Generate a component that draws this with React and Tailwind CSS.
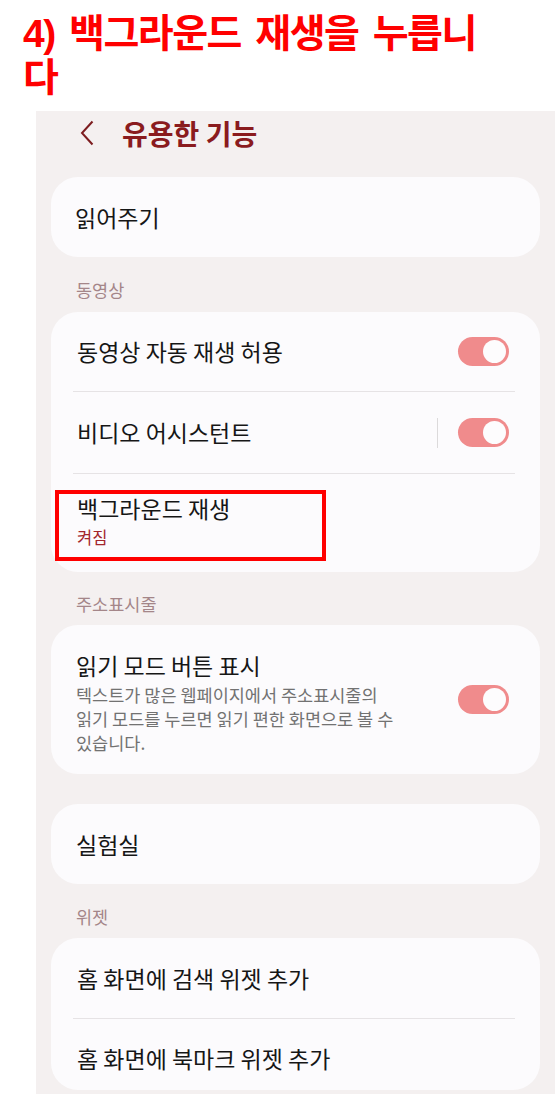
import React from 'react';

const FONT = { fontFamily: '"Noto Sans CJK KR", "Noto Sans", sans-serif' };

function Toggle() {
  return (
    <div className="w-[51px] h-[29px] rounded-full bg-[#f08b8c] flex items-center justify-end pr-[3px] shrink-0">
      <div className="w-[23px] h-[23px] rounded-full bg-[#fdfcfd]" />
    </div>
  );
}

function Divider() {
  return <div className="h-px bg-[#e6e3e5] ml-[22px] mr-[25px]" />;
}

function SectionLabel({ children, pt }) {
  return (
    <div className={`flex items-center pl-[25px] text-[17.5px] text-[#a48689] ${pt}`}>
      {children}
    </div>
  );
}

function Row({ label, height, toggle, separator }) {
  return (
    <div className={`flex items-center justify-between pl-[26px] pr-[31px] ${height}`}>
      <span className="text-[23px] text-[#161616]">{label}</span>
      {toggle && (
        <div className="flex items-center">
          {separator && <div className="w-px h-[30px] bg-[#dcdadb] mr-[20px]" />}
          <Toggle />
        </div>
      )}
    </div>
  );
}

export default function App() {
  return (
    <div className="w-[555px] h-[1094px] bg-white overflow-hidden" style={FONT}>
      <div className="h-[111px] pl-[23px] pt-[12px]">
        <h1
          className="w-[474px] text-[39px] leading-[44px] font-bold text-[#ff0000] tracking-[-1.5px] [word-spacing:5px]"
          style={{ fontFamily: '"Liberation Sans", "Noto Sans CJK KR", sans-serif' }}
        >
          4) 백그라운드 재생을 누릅니다
        </h1>
      </div>

      <div className="ml-[36px] h-[983px] bg-[#f4f0f0] px-[15px]">
        <div className="h-[44px] flex items-center">
          <svg width="14" height="26" viewBox="0 0 14 26" className="ml-[29px]">
            <path d="M12.5 1.5 L2 13 L12.5 24.5" fill="none" stroke="#7d1d20" strokeWidth="2" />
          </svg>
          <span className="ml-[28px] text-[28px] font-bold text-[#8a1b1e]">유용한 기능</span>
        </div>

        <div className="mt-[22px] h-[80px] rounded-[27px] bg-[#fcfbfd] flex items-center pl-[24px]">
          <span className="text-[23px] text-[#161616]">읽어주기</span>
        </div>

        <SectionLabel pt="h-[55px] pt-[12px]">동영상</SectionLabel>

        <div className="rounded-[27px] bg-[#fcfbfd]">
          <Row label="동영상 자동 재생 허용" height="h-[79px]" toggle />
          <Divider />
          <Row label="비디오 어시스턴트" height="h-[81px]" toggle separator />
          <Divider />
          <div className="relative h-[98px] pl-[26px] pt-[18px]">
            <div className="text-[23px] leading-[32px] text-[#161616]">백그라운드 재생</div>
            <div className="text-[16.5px] leading-[26px] text-[#a3262c]">켜짐</div>
            <div className="absolute left-[4px] top-[16px] w-[271px] h-[71px] border-4 border-[#ff0000]" />
          </div>
        </div>

        <SectionLabel pt="h-[53px] pt-[12px]">주소표시줄</SectionLabel>

        <div className="h-[149px] rounded-[27px] bg-[#fcfbfd] flex items-center justify-between pl-[25px] pr-[31px]">
          <div className="pt-[6px]">
            <div className="text-[23px] leading-[30px] text-[#161616]">읽기 모드 버튼 표시</div>
            <div className="w-[328px] mt-[3px] text-[17.5px] leading-[24px] text-[#727272] break-keep">
              텍스트가 많은 웹페이지에서 주소표시줄의 읽기 모드를 누르면 읽기 편한 화면으로 볼 수 있습니다.
            </div>
          </div>
          <Toggle />
        </div>

        <div className="mt-[30px] h-[80px] rounded-[27px] bg-[#fcfbfd] flex items-center pl-[25px]">
          <span className="text-[23px] text-[#161616]">실험실</span>
        </div>

        <SectionLabel pt="h-[54px] pt-[12px]">위젯</SectionLabel>

        <div className="h-[152px] rounded-[27px] bg-[#fcfbfd]">
          <Row label="홈 화면에 검색 위젯 추가" height="h-[80px]" />
          <Divider />
          <div className="h-[71px] flex items-center pl-[26px] pt-[7px]">
            <span className="text-[23px] text-[#161616]">홈 화면에 북마크 위젯 추가</span>
          </div>
        </div>
      </div>
    </div>
  );
}
